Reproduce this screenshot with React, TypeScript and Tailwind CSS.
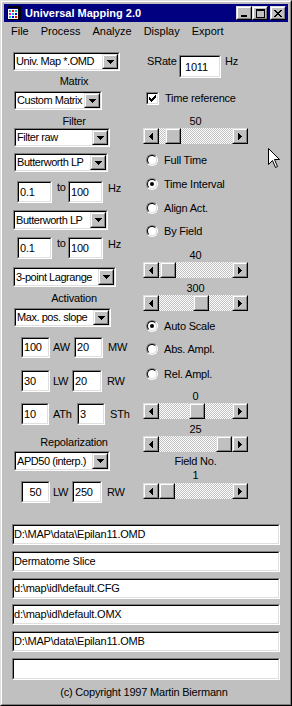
import React from "react";

type P = { className?: string; style?: React.CSSProperties; children?: React.ReactNode };

function Raised({ className = "", style, children }: P) {
  return (
    <div
      style={style}
      className={`shrink-0 border border-t-[#dfdfdf] border-l-[#dfdfdf] border-r-black border-b-black ${className}`}
    >
      <div className="flex h-full w-full items-center justify-center border border-t-white border-l-white border-r-[#808080] border-b-[#808080] bg-[#c0c0c0]">
        {children}
      </div>
    </div>
  );
}

function Sunken({ className = "", inner = "", children }: P & { inner?: string }) {
  return (
    <div className={`shrink-0 border border-t-[#808080] border-l-[#808080] border-r-white border-b-white ${className}`}>
      <div
        className={`flex h-full w-full items-center overflow-hidden whitespace-nowrap border border-t-black border-l-black border-r-[#dfdfdf] border-b-[#dfdfdf] bg-white ${inner}`}
      >
        {children}
      </div>
    </div>
  );
}

function Down() {
  return (
    <svg width="7" height="4" shapeRendering="crispEdges" className="block">
      <rect x="0" y="0" width="7" height="1" />
      <rect x="1" y="1" width="5" height="1" />
      <rect x="2" y="2" width="3" height="1" />
      <rect x="3" y="3" width="1" height="1" />
    </svg>
  );
}

function LeftArrow() {
  return (
    <svg width="4" height="7" shapeRendering="crispEdges" className="block">
      <rect x="3" y="0" width="1" height="7" />
      <rect x="2" y="1" width="1" height="5" />
      <rect x="1" y="2" width="1" height="3" />
      <rect x="0" y="3" width="1" height="1" />
    </svg>
  );
}

function RightArrow() {
  return (
    <svg width="4" height="7" shapeRendering="crispEdges" className="block">
      <rect x="0" y="0" width="1" height="7" />
      <rect x="1" y="1" width="1" height="5" />
      <rect x="2" y="2" width="1" height="3" />
      <rect x="3" y="3" width="1" height="1" />
    </svg>
  );
}

function Combo({ className = "", text }: { className?: string; text: string }) {
  return (
    <Sunken className={className}>
      <span className="min-w-0 flex-1 overflow-hidden pl-[1px] tracking-[-0.45px]">{text}</span>
      <Raised className="h-full w-[16px]">
        <Down />
      </Raised>
    </Sunken>
  );
}

function Label({ className = "", children }: P) {
  return <div className={`h-[14px] w-[122px] shrink-0 text-center leading-[14px] ${className}`}>{children}</div>;
}

function RangeRow({ className = "" }: { className?: string }) {
  return (
    <div className={`ml-[13px] flex h-[22px] shrink-0 items-start ${className}`}>
      <Sunken className="h-[22px] w-[35px]" inner="pl-[1px]">
        0.1
      </Sunken>
      <span className="w-[16px] pl-[5px] leading-[13px]">to</span>
      <Sunken className="h-[22px] w-[35px]" inner="pl-[1px]">
        100
      </Sunken>
      <span className="mt-[1px] pl-[5px] leading-[13px]">Hz</span>
    </div>
  );
}

function Scroll({ pos, className = "" }: { pos: number; className?: string }) {
  return (
    <div className={`ml-[3px] flex h-[16px] w-[105px] shrink-0 ${className}`}>
      <Raised className="h-[16px] w-[16px]">
        <LeftArrow />
      </Raised>
      <div className="flex h-[16px] flex-1 bg-[image:repeating-conic-gradient(#c0c0c0_0%_25%,#ffffff_0%_50%)] bg-[length:2px_2px]">
        <Raised className="h-[16px] w-[16px]" style={{ marginLeft: pos }} />
      </div>
      <Raised className="h-[16px] w-[16px]">
        <RightArrow />
      </Raised>
    </div>
  );
}

function Value({ className = "", children }: P) {
  return <div className={`ml-[3px] h-[13px] w-[105px] shrink-0 text-center leading-[13px] ${className}`}>{children}</div>;
}

function Radio({ checked }: { checked?: boolean }) {
  return (
    <div className="h-[12px] w-[12px] shrink-0 rounded-full border border-t-[#808080] border-l-[#808080] border-r-white border-b-white">
      <div className="flex h-full w-full items-center justify-center rounded-full border border-t-black border-l-black border-r-[#dfdfdf] border-b-[#dfdfdf] bg-white">
        {checked && <div className="h-[4px] w-[4px] rounded-full bg-black" />}
      </div>
    </div>
  );
}

function RadioRow({ label, checked, className = "" }: { label: string; checked?: boolean; className?: string }) {
  return (
    <div className={`ml-[6px] flex h-[16px] shrink-0 items-center ${className}`}>
      <Radio checked={checked} />
      <span className="ml-[6px]">{label}</span>
    </div>
  );
}

function Check() {
  const px: [number, number, number][] = [
    [6, 0, 1],
    [5, 1, 2],
    [0, 2, 1],
    [4, 2, 3],
    [0, 3, 2],
    [3, 3, 3],
    [0, 4, 5],
    [1, 5, 3],
    [2, 6, 1],
  ];
  return (
    <svg width="7" height="7" shapeRendering="crispEdges" className="block">
      {px.map(([x, y, w], i) => (
        <rect key={i} x={x} y={y} width={w} height="1" />
      ))}
    </svg>
  );
}

function AppIcon() {
  return (
    <svg width="16" height="16" viewBox="0 0 16 16" shapeRendering="crispEdges" className="block">
      <rect x="3" y="1" width="12" height="14" fill="#000" />
      <rect x="1" y="2" width="12" height="13" fill="#000" />
      <rect x="2" y="4" width="10" height="10" fill="#fff" />
      <rect x="2" y="3" width="10" height="1" fill="#000080" />
      <rect x="3" y="5" width="2" height="2" fill="#00c0c0" />
      <rect x="6" y="5" width="2" height="2" fill="#ff0000" />
      <rect x="9" y="5" width="2" height="2" fill="#00c0c0" />
      <rect x="3" y="8" width="2" height="2" fill="#ff00ff" />
      <rect x="6" y="8" width="2" height="2" fill="#00c0c0" />
      <rect x="9" y="8" width="2" height="2" fill="#0000ff" />
      <rect x="3" y="11" width="2" height="2" fill="#00c0c0" />
      <rect x="6" y="11" width="2" height="2" fill="#0000ff" />
      <rect x="9" y="11" width="2" height="2" fill="#ff0000" />
    </svg>
  );
}

function MinIcon() {
  return (
    <svg width="8" height="8" shapeRendering="crispEdges" className="block">
      <rect x="1" y="6" width="6" height="2" />
    </svg>
  );
}
function MaxIcon() {
  return (
    <svg width="9" height="9" shapeRendering="crispEdges" className="block">
      <rect x="0" y="0" width="9" height="2" />
      <rect x="0" y="0" width="1" height="9" />
      <rect x="8" y="0" width="1" height="9" />
      <rect x="0" y="8" width="9" height="1" />
    </svg>
  );
}
function CloseIcon() {
  const rows: [number, number, number][] = [
    [0, 0, 2],
    [6, 0, 2],
    [1, 1, 2],
    [5, 1, 2],
    [2, 2, 4],
    [3, 3, 2],
    [2, 4, 4],
    [1, 5, 2],
    [5, 5, 2],
    [0, 6, 2],
    [6, 6, 2],
  ];
  return (
    <svg width="8" height="7" shapeRendering="crispEdges" className="block">
      {rows.map(([x, y, w], i) => (
        <rect key={i} x={x} y={y} width={w} height="1" />
      ))}
    </svg>
  );
}

function Cursor() {
  return (
    <svg width="13" height="21" viewBox="0 0 13 21" className="block">
      <path
        d="M0.5 0.5 L0.5 16.5 L4.5 12.5 L7.5 19.5 L9.5 18.5 L6.5 11.5 L11.5 11.5 Z"
        fill="#fff"
        stroke="#000"
        strokeWidth="1"
        strokeLinejoin="miter"
      />
    </svg>
  );
}

export default function App() {
  return (
    <div className="relative h-[706px] w-[292px] overflow-hidden bg-[#c0c0c0] font-['Liberation_Sans',Arial,sans-serif] text-[11px] leading-[13px] tracking-[-0.2px] text-black">
      <div className="h-full w-full border border-t-[#dfdfdf] border-l-[#dfdfdf] border-r-black border-b-black">
        <div className="flex h-full w-full flex-col border border-t-white border-l-white border-r-[#808080] border-b-[#808080] p-[2px]">
          {/* Title bar */}
          <div className="flex h-[18px] shrink-0 items-center bg-[#000080] pl-[2px] pr-[2px]">
            <AppIcon />
            <span className="ml-[3px] text-[11px] font-bold tracking-normal text-white">Universal Mapping 2.0</span>
            <div className="ml-auto flex items-center">
              <Raised className="h-[14px] w-[16px]">
                <MinIcon />
              </Raised>
              <Raised className="h-[14px] w-[16px]">
                <MaxIcon />
              </Raised>
              <Raised className="ml-[2px] h-[14px] w-[16px]">
                <CloseIcon />
              </Raised>
            </div>
          </div>
          {/* Menu */}
          <div className="flex h-[18px] shrink-0 items-center pl-[1px] tracking-normal">
            {["File", "Process", "Analyze", "Display", "Export"].map((m) => (
              <span key={m} className="px-[6px]">
                {m}
              </span>
            ))}
          </div>
          {/* Client */}
          <div className="flex flex-1 flex-col">
            <div className="flex h-[463px] shrink-0 items-start">
              {/* Left column */}
              <div className="flex w-[136px] shrink-0 flex-col items-start">
                <Combo className="ml-[9px] mt-[12px] h-[19px] w-[107px]" text="Univ. Map *.OMD" />
                <Label className="ml-[9px] mt-[3px]">Matrix</Label>
                <Combo className="ml-[10px] mt-[3px] h-[19px] w-[88px]" text="Custom Matrix" />
                <Label className="ml-[9px] mt-[4px]">Filter</Label>
                <Combo className="ml-[10px] h-[19px] w-[96px]" text="Filter raw" />
                <Combo className="ml-[10px] mt-[6px] h-[19px] w-[94px]" text="Butterworth LP" />
                <RangeRow className="mt-[9px]" />
                <Combo className="ml-[9px] mt-[7px] h-[20px] w-[95px]" text="Butterworth LP" />
                <RangeRow className="mt-[7px]" />
                <Combo className="ml-[9px] mt-[8px] h-[20px] w-[103px]" text="3-point Lagrange" />
                <Label className="ml-[9px] mt-[4px]">Activation</Label>
                <Combo className="ml-[10px] mt-[3px] h-[19px] w-[97px]" text="Max. pos. slope" />

                <div className="ml-[17px] mt-[10px] flex h-[21px] shrink-0 items-center">
                  <Sunken className="h-[21px] w-[29px]" inner="pl-[1px]">
                    100
                  </Sunken>
                  <span className="w-[24px] pl-[3px]">AW</span>
                  <Sunken className="h-[21px] w-[29px]" inner="pl-[1px]">
                    20
                  </Sunken>
                  <span className="pl-[5px]">MW</span>
                </div>
                <div className="ml-[17px] mt-[12px] flex h-[22px] shrink-0 items-center">
                  <Sunken className="h-[22px] w-[29px]" inner="pl-[1px]">
                    30
                  </Sunken>
                  <span className="w-[22px] pl-[3px]">LW</span>
                  <Sunken className="h-[22px] w-[30px]" inner="pl-[1px]">
                    20
                  </Sunken>
                  <span className="pl-[5px]">RW</span>
                </div>
                <div className="ml-[17px] mt-[11px] flex h-[22px] shrink-0 items-center">
                  <Sunken className="h-[22px] w-[28px]" inner="pl-[1px]">
                    10
                  </Sunken>
                  <span className="w-[28px] pl-[4px]">ATh</span>
                  <Sunken className="h-[22px] w-[28px]" inner="pl-[1px]">
                    3
                  </Sunken>
                  <span className="pl-[5px]">STh</span>
                </div>
                <Label className="ml-[9px] mt-[10px]">Repolarization</Label>
                <Combo className="ml-[10px] mt-[2px] h-[20px] w-[96px]" text="APD50 (interp.)" />
                <div className="ml-[17px] mt-[10px] flex h-[22px] shrink-0 items-center">
                  <Sunken className="h-[22px] w-[29px]" inner="justify-center">
                    50
                  </Sunken>
                  <span className="w-[22px] pl-[3px]">LW</span>
                  <Sunken className="h-[22px] w-[30px]" inner="pl-[1px]">
                    250
                  </Sunken>
                  <span className="pl-[5px]">RW</span>
                </div>
              </div>

              {/* Right column */}
              <div className="flex w-[148px] shrink-0 flex-col items-start">
                <div className="ml-[7px] mt-[15px] flex h-[23px] shrink-0 items-start">
                  <span className="w-[32px]">SRate</span>
                  <Sunken className="h-[23px] w-[42px]" inner="pl-[4px] pt-[2px]">
                    1011
                  </Sunken>
                  <span className="pl-[4px]">Hz</span>
                </div>
                <div className="ml-[6px] mt-[13px] flex h-[14px] shrink-0 items-center">
                  <Sunken className="h-[13px] w-[13px]" inner="justify-center">
                    <Check />
                  </Sunken>
                  <span className="ml-[6px]">Time reference</span>
                </div>
                <Value className="mt-[10px]">50</Value>
                <Scroll pos={6} />
                <RadioRow className="mt-[8px]" label="Full Time" />
                <RadioRow className="mt-[8px]" label="Time Interval" checked />
                <RadioRow className="mt-[8px]" label="Align Act." />
                <RadioRow className="mt-[7px]" label="By Field" />
                <Value className="mt-[10px]">40</Value>
                <Scroll pos={1} />
                <Value className="mt-[4px]">300</Value>
                <Scroll pos={34} />
                <RadioRow className="mt-[7px]" label="Auto Scale" checked />
                <RadioRow className="mt-[7px]" label="Abs. Ampl." />
                <RadioRow className="mt-[9px]" label="Rel. Ampl." />
                <Value className="mt-[8px]">0</Value>
                <Scroll pos={30} />
                <Value className="mt-[4px]">25</Value>
                <Scroll pos={57} />
                <Value className="mt-[3px]">Field No.</Value>
                <Value className="mt-[1px]">1</Value>
                <Scroll pos={0} className="mt-[1px]" />
              </div>
            </div>

            {/* Bottom fields */}
            <div className="ml-[8px] mt-[21px] flex shrink-0 flex-col">
              <Sunken className="h-[21px] w-[268px]">{"D:\\MAP\\data\\Epilan11.OMD"}</Sunken>
              <Sunken className="mt-[6px] h-[21px] w-[268px]">Dermatome Slice</Sunken>
              <Sunken className="mt-[6px] h-[21px] w-[268px]">{"d:\\map\\idl\\default.CFG"}</Sunken>
              <Sunken className="mt-[5px] h-[21px] w-[268px]">{"d:\\map\\idl\\default.OMX"}</Sunken>
              <Sunken className="mt-[6px] h-[21px] w-[268px]">{"D:\\MAP\\data\\Epilan11.OMB"}</Sunken>
              <Sunken className="mt-[6px] h-[22px] w-[268px]">{""}</Sunken>
            </div>
            <div className="mt-[5px] h-[14px] shrink-0 pr-[4px] text-center leading-[14px]">
              (c) Copyright 1997 Martin Biermann
            </div>
          </div>
        </div>
      </div>
      <div className="absolute left-[268px] top-[148px]">
        <Cursor />
      </div>
    </div>
  );
}
